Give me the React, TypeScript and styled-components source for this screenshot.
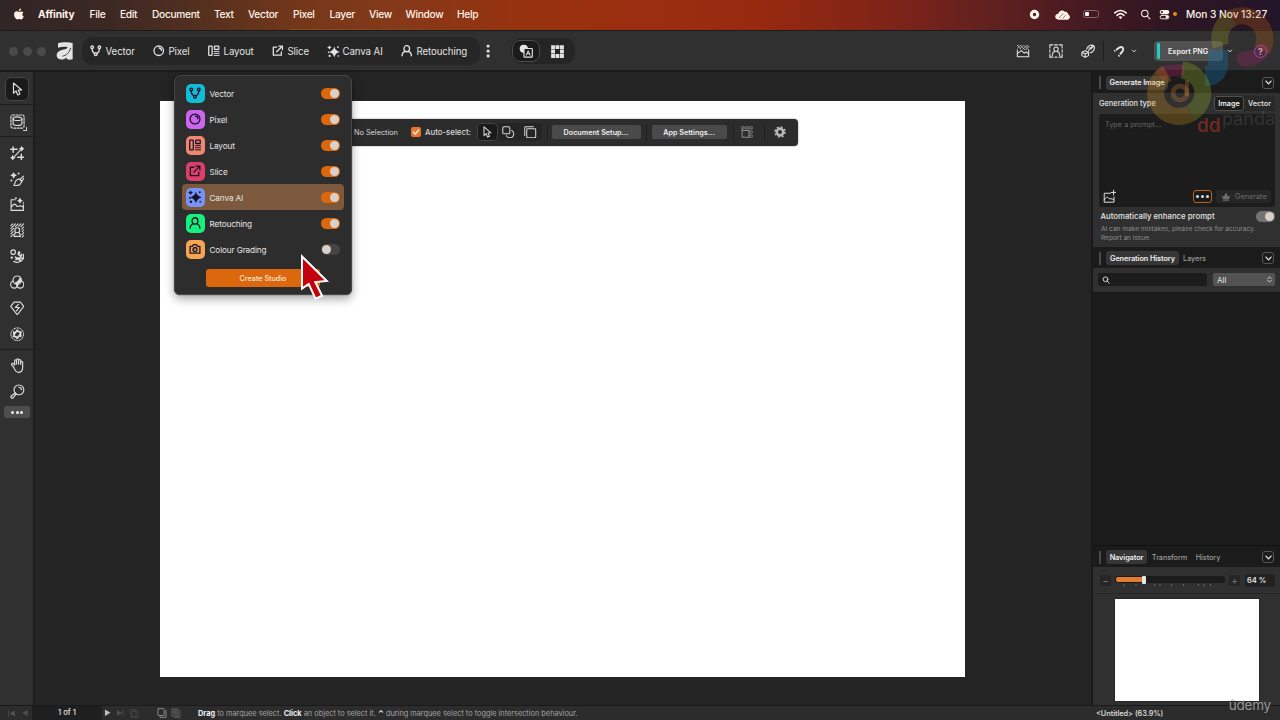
import React from 'react';
import styled, { createGlobalStyle, css } from 'styled-components';

const Global = createGlobalStyle`
  * { box-sizing: border-box; }
  html, body { margin: 0; padding: 0; overflow: hidden; background: #242424; }
  body { font-family: Inter, "Liberation Sans", sans-serif; color: #e4e4e4; -webkit-font-smoothing: antialiased; }
`;

/* ---------- icons ---------- */
type IconName =
  | 'apple' | 'logo' | 'vector' | 'pixel' | 'layout' | 'slice' | 'ai' | 'person' | 'camera' | 'dots'
  | 'shapeA' | 'gridSq' | 'noBg' | 'subject' | 'depth' | 'magnet' | 'chev' | 'arrow' | 'crop' | 'genExpand'
  | 'genBrush' | 'genImage' | 'bgRemove' | 'retouch' | 'colour' | 'quick' | 'lens' | 'hand' | 'zoom'
  | 'shapes' | 'layers' | 'snapGrid' | 'gear' | 'imgPlus' | 'crown' | 'search' | 'record' | 'cloud'
  | 'wifi' | 'control' | 'first' | 'prev' | 'next' | 'last' | 'page' | 'copy' | 'pageList' | 'updown';

const star = (x: number, y: number, r: number) => (
  <path
    fill="currentColor" stroke="none"
    d={`M${x} ${y - r}Q${x + r * 0.18} ${y - r * 0.18} ${x + r} ${y}Q${x + r * 0.18} ${y + r * 0.18} ${x} ${y + r}Q${x - r * 0.18} ${y + r * 0.18} ${x - r} ${y}Q${x - r * 0.18} ${y - r * 0.18} ${x} ${y - r}Z`}
  />
);

const drawings: Record<IconName, React.ReactNode> = {
  apple: <path fill="currentColor" stroke="none" d="M11.3 4.2c.9-.1 2 .3 2.7 1.2-2 1.3-1.700 4.200.4 5.100-.6 1.700-1.700 3.500-2.900 3.500-1 0-1.300-.6-2.500-.6s-1.600.6-2.500.6C4.700 14 2.600 10.800 2.600 8.100c0-2.600 1.600-4 3.200-4 1.100 0 2 .7 2.700.7s1.700-.6 2.800-.6zM8.400 3.800C8.300 2.200 9.600.8 11.100.6c.2 1.700-1.200 3.200-2.700 3.200z" />,
  logo: (
    <>
      <path fill="currentColor" stroke="none" d="M1.800 1.200C5 .1 11 0 14.800.8V15.400c-2 .6-3.800.5-5.300-.2v-1.400c-2.500 2.600-8.600 2.600-8.900-1.500C.4 8.600 4.500 7 9.300 6.100L10.300 4.500C8 3.900 4.500 4.100 1.800 5z" />
      <path d="M13 5.600C11.700 9.700 9.300 12.100 6 12.500" stroke="#303030" strokeWidth=".8" />
    </>
  ),
  vector: (
    <>
      <circle cx="3" cy="3.200" r="1.800" /><circle cx="13" cy="3.200" r="1.800" /><circle cx="8" cy="13" r="1.900" />
      <path d="M2.700 5c0 3 1 5 3.500 6.700M13.300 5c0 3-1 5-3.500 6.700" />
    </>
  ),
  pixel: <><circle cx="8" cy="8" r="6.600" /><path d="M8.500 4.200c1.800.1 3.200 1.400 3.300 3.300" /></>,
  layout: <><rect x="1" y="1.500" width="4.700" height="13" rx=".8" /><rect x="9" y="1.500" width="6" height="4.500" rx=".5" /><path d="M8.500 8.900h7M8.500 11.700h7M8.500 14.500h7" strokeWidth="1.300" /></>,
  slice: <><path d="M6.500 3H1.800v11.200H13V9.500M6.500 9.500 14.500 1.500M9.500 1.500h5v5" /></>,
  ai: <>{star(9, 8.500, 6.700)}{star(3, 3, 2.800)}<circle cx="13.500" cy="2.500" r="1.100" fill="currentColor" stroke="none" /><circle cx="2" cy="9" r="1" fill="currentColor" stroke="none" /><circle cx="3.300" cy="13.500" r="1.400" fill="currentColor" stroke="none" /><circle cx="14" cy="13.500" r="1" fill="currentColor" stroke="none" /></>,
  person: <><ellipse cx="8" cy="5.200" rx="3.900" ry="4.200" /><path d="M1.500 15c0-3.300 1.900-5.200 4.300-6M14.500 15c0-3.300-1.900-5.200-4.300-6" /></>,
  camera: <><path d="M1.500 4.500h3L6 2.200h4l1.500 2.300h3v9h-13z" /><circle cx="8" cy="8.700" r="2.700" /><path d="M7 8.700 8 7.500" strokeWidth="1" /></>,
  dots: <><rect x="6.700" y="1.800" width="2.800" height="2.800" rx=".8" fill="currentColor" stroke="none" /><rect x="6.700" y="6.700" width="2.800" height="2.800" rx=".8" fill="currentColor" stroke="none" /><rect x="6.700" y="11.600" width="2.800" height="2.800" rx=".8" fill="currentColor" stroke="none" /></>,
  shapeA: <><circle cx="5.500" cy="5.500" r="4.700" fill="currentColor" stroke="none" /><rect x="5.700" y="5.200" width="9.500" height="9.800" rx=".8" fill="#1b1b1b" strokeWidth="1.300" /><path d="m8.400 12.800 2.100-5.200 2.100 5.200M9.200 11h2.700" strokeWidth="1.100" /></>,
  gridSq: <path fill="currentColor" stroke="none" fillRule="evenodd" d="M1.200 1.200h4.100v4.100H1.200zM5.900 1.200H10v4.100H5.900zM10.700 1.200h4.100v4.100h-4.100zM1.200 5.900h4.100V10H1.200zM10.700 5.900h4.100V10h-4.100zM1.200 10.700h4.100v4.100H1.200zM5.900 10.700H10v4.100H5.900zM10.700 10.700h4.100v4.100h-4.100z" />,
  noBg: <><path d="M1.500 7v7.500h13V7M1.500 11 6 7.500l3.500 3 2-1.500 3 2.500" /><path d="m1.500 5 3.500-3.500M4.500 5.500l4-4M8 6l4.500-4.500M11 6.500l3.800-4M1.500 2l1-1M1.500 1.500l4 4M5 1.500l5 5M9 1.500l5 5M12.500 1.500l2 2" strokeWidth=".7" /></>,
  subject: <><path d="M1 4.500V1h3.500M11.500 1H15v3.500M15 11.500V15h-3.500M4.500 15H1v-3.500M6.500 1h3M1 6.500v3M15 6.500v3M7 15h2" /><circle cx="8" cy="6" r="2.500" /><path d="M3.700 13c0-2 1-3.800 2.800-4.700M12.300 13c0-2-1-3.800-2.800-4.700" /></>,
  depth: <><path d="M1 9.500 4.800 7.700l3.800 1.800v3.800l-3.800 2-3.800-2zM1 9.500l3.800 2 3.800-2M4.800 11.500v3.800" /><path d="M6.500 6c1-3 3.500-5 6.500-4.800C16 1.500 15.800 5 14.500 7c-1 1.700-2.500 2.800-4 3M8.500 8c0-2.500 4-2 6-5.800M9 4.500c1.500.5 3 0 4-3.300" /></>,
  magnet: <><path d="M4 6.300 8 3.300c4-2.200 6.500 1.700 4.500 4.300L9 12" strokeWidth="2.500" strokeLinecap="butt" /><path d="M1.700 8 2.900 7.100M7 14.500l1.100-1.400" strokeWidth="2.500" strokeLinecap="butt" /></>,
  chev: <path d="m3.500 5.500 4.500 5 4.500-5" strokeWidth="2.300" />,
  arrow: <path d="M4 1.200v11.600l3-2.600 1.800 4.600 2.500-1L9.500 9.300l3.800-.2z" />,
  crop: <><rect x="1" y="1" width="14" height="14" rx="2" strokeDasharray="2.200 1.400" /><ellipse cx="8" cy="5" rx="4.700" ry="1.900" /><path d="M3.300 5v5.500c0 2.400 9.400 2.400 9.400 0V5" /></>,
  genExpand: <><path d="M3.500 1v6M.8 3.500h7M12.500 9v6M8.500 12.500H15.300" strokeWidth="1.600" /><path d="m5 11.500 6.500-7" />{star(13, 3, 3.400)}{star(3, 13, 3.400)}</>,
  genBrush: <>{star(4, 3.700, 3.700)}<circle cx="9.500" cy="1.700" r="1.100" fill="currentColor" stroke="none" /><circle cx="1.500" cy="9.500" r="1.100" fill="currentColor" stroke="none" /><path d="m15 4.500-4.500 4M12.500 11.500 15 7M8.500 8c2.500-.7 4.500 1.200 4 3.300-.7 2.700-4 4.200-8.200 3.500 1.500-1.500.7-5.500 4.200-6.800z" /></>,
  genImage: <><path d="M5.500 3H1.200v11.800h13.600V8.500M1.500 11c3-4.500 4.500-3.500 6-.8 1.500 1 2.500-2.200 7 .8" />{star(11, 4, 3.500)}<circle cx="6.500" cy="1.500" r="1.100" fill="currentColor" stroke="none" /><circle cx="15" cy="6.500" r=".9" fill="currentColor" stroke="none" /></>,
  bgRemove: <><path d="m1 3 2-2M1 6l5-5M1 9l3-3M6 4l3-3M1 12l2.500-2.500M1 15l2.500-2.500M9.500 3.500 12 1M12 4l3-3M13 6.500l2-2M13.500 9.500l1.500-2M13 13l2.200-2.500M13.500 15.500l1.800-2" strokeWidth="1.150" /><circle cx="8" cy="8" r="2.700" /><path d="M4.500 15c0-2 .5-3.500 1.800-4.500M11.500 15c0-2-.5-3.500-1.800-4.500M5.500 14.800h5" /></>,
  retouch: <><circle cx="3.500" cy="3.500" r="2.500" /><path d="M14.800 6c1.200 6-5 11-10.800 7.500" /><path d="M9 5.500 10.500 7M6 9l6 4M13 6l-2 4M6.500 11.500l3-1.500M12 10l2.500.5" strokeWidth="1.800" /><circle cx="10" cy="4" r=".9" fill="currentColor" /><circle cx="2" cy="9.500" r=".7" fill="currentColor" /></>,
  colour: <><circle cx="4.700" cy="10.500" r="4" /><circle cx="11.300" cy="10.500" r="4" /><circle cx="8" cy="5.700" r="4.600" fill="#303030" /><path d="M4.500 8.800C8 8 9.800 5.500 11 2.300 14.500 6 12 10 8 10c-1.500 0-2.800-.4-3.500-1.200z" fill="currentColor" stroke="none" /><path d="M8 10.300v2.500" /></>,
  quick: <><path d="M4.500 1.300h7L15.200 6 8 15.200.8 6z" /><path d="M9.300 3.800 5.900 7.200h4.400L7 10.800" /></>,
  lens: <><circle cx="8" cy="8" r="7" strokeDasharray="1.800 1.400" strokeWidth="1.100" /><path d="M8 3.500 5.200 7.200M4.200 5.800 4.800 10M3.800 10.200 7.800 11.500M7.700 12.500 11 8.800M11.900 10.200 11.200 5.900M12.200 5.800 8.200 4.500" strokeWidth="2" /></>,
  hand: <path d="M4 10 2 7.500c-1-1.300.5-2.500 1.600-1.500L5 7.500V3c0-1.500 2-1.500 2 0v3.500V1.900c0-1.500 2.200-1.500 2.200 0v4.600V2.700c0-1.500 2.200-1.400 2.200 0v4.200V4.600c0-1.400 2.100-1.400 2.100 0v5.200c0 3.700-2 5.500-4.700 5.500C6 15.300 5.200 12.500 4 10z" />,
  zoom: <><circle cx="9.500" cy="6.300" r="5.200" /><path d="M5.800 9.500 1.200 12.800c-.7 1.500.6 2.700 2 2.100L6.700 10.600M9.500 3.500c1.500 0 2.500 1 2.700 2.500" /></>,
  shapes: <><rect x="1" y="1" width="9" height="9" rx="1.500" /><path d="M12.500 5.800a5 5 0 1 1-7 6.500" /></>,
  layers: <><rect x="3.500" y="3.500" width="11.500" height="11.500" rx="1.200" /><path d="M1 12V2c0-.6.400-1 1-1h10" /></>,
  snapGrid: <><path d="M1 1h3v3H1zM6.500 1h3v3h-3zM12 1h3v3h-3zM12 6.500h3v3h-3zM12 12h3v3h-3z" strokeWidth=".8" /><path d="M1.500 6v9h9V6z" strokeDasharray="1.200 1.300" strokeWidth="1.200" /></>,
  gear: <><circle cx="8" cy="8" r="4.300" strokeWidth="3.200" /><circle cx="8" cy="8" r="6.600" strokeWidth="2.200" strokeDasharray="2.600 2.584" strokeLinecap="butt" /></>,
  imgPlus: <><path d="M9 4H1.500v11h12V8.500M1.500 12C4 8 5.500 8 7.500 10.500c1.500 1.200 2.500-1 6 1.500M13 0v6M10 3h6" /></>,
  crown: <path fill="currentColor" stroke="none" d="M3 14h10v-1.700H3zM3.200 11.500h9.600L15 5l-3.500 2.500L8.700 2H7.300L4.500 7.500 1 5z" />,
  search: <><circle cx="7" cy="6.500" r="4.700" /><path d="m10.500 10.200 4 4.300" /></>,
  record: <><circle cx="8" cy="8" r="4.700" strokeWidth="4.400" /></>,
  cloud: <><path fill="currentColor" stroke="none" d="M4 13.500C1.500 13.500 0 12 .3 10S2.500 7.300 3.500 7.300C4 4.500 6.700 3 9 4l1.500 1C13 4.700 14 6.500 14 8c2.500.5 2.700 5.500-1 5.500z" /><path d="m4.500 11.500 4-4.500M8.500 12 11 9" stroke="#5a2020" strokeWidth=".6" /></>,
  wifi: <><path d="M1 6c4-4 10-4 14 0" strokeWidth="2" /><path d="M3.800 9c2.600-2.500 5.800-2.500 8.400 0" strokeWidth="2" /><path fill="currentColor" stroke="none" d="m8 13.800 2.300-2.600c-1.300-1.200-3.300-1.200-4.600 0z" /></>,
  control: <><rect x="1" y="1.500" width="14" height="6" rx="3" fill="currentColor" stroke="none" /><circle cx="4.200" cy="4.500" r="1.600" fill="#40202a" stroke="none" /><rect x="1.600" y="9.300" width="12.800" height="5" rx="2.500" /><circle cx="11.500" cy="11.800" r="2" fill="currentColor" stroke="none" /></>,
  first: <><path d="M2.500 3v10" strokeWidth="1.600" /><path fill="currentColor" stroke="none" d="M14 2.500v11L4 8z" /></>,
  prev: <path fill="currentColor" stroke="none" d="M13 2v12L2.500 8z" />,
  next: <path fill="currentColor" stroke="none" d="M2 1v14L14 8z" />,
  last: <><path d="M14 3v10" strokeWidth="1.600" /><path fill="currentColor" stroke="none" d="M2 2.500v11L12 8z" /></>,
  page: <><path d="M1.500 1.500h9v12h-9zM4.500 4.500h9.500V15H4.500z" /></>,
  copy: <><rect x="1.500" y="1" width="10" height="11" rx="1" /><path d="M14.500 4v11H5v-1" /></>,
  pageList: <><rect x="2" y="1.500" width="9.500" height="11.500" fill="currentColor" fillOpacity=".4" /><path d="M14.500 4v11H5M4 5h5M4 8h5" /></>,
  updown: <path d="m4 6 4-4 4 4M4 10l4 4 4-4" strokeWidth="2" />,
};

const Svg = styled.svg`
  display: block;
  flex: none;
  fill: none;
  stroke: currentColor;
  stroke-linecap: round;
  stroke-linejoin: round;
`;

const Icon = ({ name, size = 14, w = 1.35 }: { name: IconName; size?: number; w?: number }) => (
  <Svg viewBox="0 0 16 16" width={size} height={size} strokeWidth={w}>{drawings[name]}</Svg>
);

/* ---------- frame ---------- */
const Window = styled.div`
  position: relative;
  width: 1280px;
  height: 720px;
  display: flex;
  flex-direction: column;
  overflow: hidden;
  background: #242424;
`;

const MenuBar = styled.header`
  height: 30px;
  flex: none;
  display: flex;
  align-items: center;
  padding: 0 10px 2px 12px;
  color: #fff3ea;
  font-size: 10.200px;
  font-weight: 500;
  background:
    linear-gradient(90deg, transparent 290px, #84501c 290px, #8a3a14 480px, transparent 640px) 0 100% / 100% 1px no-repeat,
    linear-gradient(90deg, #302625 0, #3c2823 110px, #54301f 200px, #743719 300px, #84391a 390px, #97320f 520px, #9b2d10 650px, #97290f 760px, #7c2319 900px, #64211f 980px, #471a22 1080px, #2e1622 1170px, #23152a 1280px);
`;

const MenuItem = styled.span<{ $w: number; $bold?: boolean; $ls?: number }>`
  width: ${p => p.$w}px;
  flex: none;
  white-space: nowrap;
  font-weight: ${p => (p.$bold ? 700 : 500)};
  letter-spacing: ${p => p.$ls ?? -0.3}px;
`;

const Spacer = styled.span`flex: 1;`;

const Slot = styled.span<{ $w: number; $color?: string }>`
  width: ${p => p.$w}px;
  flex: none;
  display: flex;
  align-items: center;
  color: ${p => p.$color ?? 'inherit'};
`;

const Battery = styled.span`
  width: 16px;
  height: 8px;
  border: 1px solid #8d6263;
  border-radius: 2.500px;
  padding: 1px;
  &::before { content: ''; display: block; width: 4px; height: 4px; background: #fff; border-radius: 1px; }
`;

const OrangeDot = styled.span`
  width: 4px;
  height: 4px;
  border-radius: 50%;
  background: #ef8a10;
  margin-left: 3px;
`;

const TopBar = styled.div`
  height: 42px;
  flex: none;
  display: flex;
  align-items: center;
  background: #303030;
  border-top: 1px solid #1c1a1c;
  border-bottom: 2px solid #1b1b1b;
  padding: 1px 13px 0 9px;
`;

const Lights = styled.div`
  display: flex;
  gap: 5px;
  width: 47px;
  & > i { width: 9px; height: 9px; border-radius: 50%; background: #4a4a4a; }
`;

const StudioBar = styled.nav`
  height: 28px;
  width: 398px;
  margin-left: 8px;
  padding-left: 8px;
  border-radius: 10px;
  background: #262626;
  display: flex;
  align-items: center;
`;

const StudioTab = styled.span<{ $w: number }>`
  width: ${p => p.$w}px;
  flex: none;
  display: flex;
  align-items: center;
  font-size: 9.700px;
  letter-spacing: -0.1px;
  white-space: nowrap;
  color: #e2e2e2;
`;

const ViewSwitch = styled.div`
  height: 26px;
  width: 64px;
  margin-left: 15px;
  display: flex;
  align-items: center;
  border-radius: 11px;
  background: #252525;
`;

const SwitchButton = styled.span<{ $on?: boolean }>`
  width: ${p => (p.$on ? 28 : 36)}px;
  height: 22px;
  margin-left: ${p => (p.$on ? 1 : 0)}px;
  display: flex;
  align-items: center;
  justify-content: center;
  border-radius: 8px;
  ${p => p.$on && css`background: #1b1b1b; border: 1px solid #4b4b4b;`}
`;

const Rule = styled.span<{ $h: number; $m?: string }>`
  width: 1px;
  height: ${p => p.$h}px;
  background: #202020;
  margin: ${p => p.$m ?? '0'};
`;

const ExportButton = styled.span`
  width: 69px;
  height: 20px;
  display: flex;
  align-items: center;
  gap: 8px;
  padding-left: 3px;
  background: #515151;
  border-radius: 4px;
  font-size: 7.200px;
  font-weight: 600;
  color: #f1f1f1;
  white-space: nowrap;
  &::before { content: ''; width: 3px; height: 16px; background: #1fcdc9; border-radius: 1px; }
`;

const Help = styled.span`
  width: 13px;
  height: 13px;
  border: 1px solid #7a63b5;
  border-radius: 50%;
  display: flex;
  align-items: center;
  justify-content: center;
  font-size: 9px;
  font-weight: 600;
  color: #ece6f4;
`;

const Body = styled.div`
  flex: 1;
  min-height: 0;
  display: flex;
`;

/* ---------- left tools ---------- */
const Tools = styled.aside`
  width: 35px;
  flex: none;
  background: #303030;
  border-right: 2px solid #1e1e1e;
  display: flex;
  flex-direction: column;
  padding-top: 1px;
`;

const ToolGroup = styled.div<{ $pad: string; $line?: boolean }>`
  padding: ${p => p.$pad};
  display: flex;
  flex-direction: column;
  align-items: center;
  border-bottom: ${p => (p.$line ? '1px solid #1d1d1d' : '0')};
`;

const Tool = styled.span<{ $h: number; $on?: boolean }>`
  position: relative;
  width: 24px;
  height: ${p => p.$h}px;
  flex: none;
  display: flex;
  align-items: center;
  justify-content: center;
  color: #dedede;
  border-radius: 6px;
  ${p => p.$on && css`background: #1a1a1a; border: 1px solid #454545;`}
`;

const Corner = styled.i`
  position: absolute;
  right: 2px;
  bottom: 2px;
  width: 4px;
  height: 4px;
  border-right: 1px solid #ccc;
  border-bottom: 1px solid #ccc;
`;

const More = styled.span`
  width: 26px;
  height: 12px;
  margin: 2px auto 0 4px;
  border-radius: 2px;
  background: #4e4e4e;
  display: flex;
  align-items: center;
  justify-content: center;
  gap: 1.500px;
  & > i { width: 3px; height: 3px; border-radius: 50%; background: #eee; }
`;

/* ---------- canvas ---------- */
const Stage = styled.main`
  position: relative;
  width: 1056px;
  flex: none;
  padding: 28.500px 0 0 125px;
  background: #242424;
`;

const Artboard = styled.div`
  width: 805px;
  height: 576px;
  background: #fff;
`;

const ContextBar = styled.div`
  position: absolute;
  left: 265px;
  top: 47px;
  width: 498px;
  height: 27px;
  display: flex;
  align-items: center;
  padding: 0 0 1px 54px;
  border-radius: 4px;
  background: #2c2c2c;
  box-shadow: 0 0 2px rgba(0, 0, 0, .45);
  font-size: 7.300px;
  color: #dadada;
  white-space: nowrap;
`;

const Check = styled.span`
  width: 10px;
  height: 10px;
  flex: none;
  border-radius: 2px;
  background: #e8762b;
  display: flex;
  align-items: center;
  justify-content: center;
`;

const Segments = styled.span`
  width: 65px;
  height: 18px;
  display: flex;
  align-items: center;
  background: #252525;
  border-radius: 4px;
`;

const Segment = styled.span<{ $on?: boolean }>`
  width: ${p => (p.$on ? 21 : 22)}px;
  height: 18px;
  display: flex;
  align-items: center;
  justify-content: center;
  border-radius: 4px;
  ${p => p.$on && css`background: #1b1b1b; border: 1px solid #424242;`}
`;

const BarButton = styled.span<{ $w: number }>`
  width: ${p => p.$w}px;
  height: 14px;
  border-radius: 2px;
  background: #4a4a4a;
  color: #eee;
  font-size: 7.200px;
  font-weight: 600;
  display: flex;
  align-items: center;
  justify-content: center;
`;

const Label = styled.span<{ $w?: number; $size?: number; $weight?: number; $color?: string }>`
  width: ${p => (p.$w ? p.$w + 'px' : 'auto')};
  flex: none;
  white-space: nowrap;
  font-size: ${p => p.$size ?? 7.3}px;
  font-weight: ${p => p.$weight ?? 400};
  color: ${p => p.$color ?? 'inherit'};
`;

/* ---------- studio menu ---------- */
const Popup = styled.div`
  position: absolute;
  left: 174px;
  top: 75px;
  width: 178px;
  height: 219.500px;
  padding: 4px 7px 0;
  border-radius: 6px;
  border: 1px solid #484848;
  background: #2d2d2d;
  box-shadow: 0 4px 10px rgba(0, 0, 0, .35), 0 0 1px #000;
  display: flex;
  flex-direction: column;
`;

const PopupRow = styled.div<{ $on?: boolean }>`
  height: 26px;
  flex: none;
  display: flex;
  align-items: center;
  padding: 0 4px 0 4px;
  border-radius: 4px;
  background: ${p => (p.$on ? '#7c583c' : 'transparent')};
`;

const Badge = styled.span<{ $bg: string }>`
  width: 18.500px;
  height: 19px;
  border-radius: 5px;
  background: ${p => p.$bg};
  color: #17122a;
  display: flex;
  align-items: center;
  justify-content: center;
`;

const RowName = styled.span`
  flex: 1;
  padding: 1px 0 0 5px;
  font-size: 8.200px;
  letter-spacing: -0.12px;
  color: #e4e4e4;
`;

const Toggle = styled.span<{ $on?: boolean; $muted?: boolean }>`
  width: 19px;
  height: 11px;
  border-radius: 6px;
  padding: 1px;
  display: flex;
  justify-content: ${p => (p.$on ? 'flex-end' : 'flex-start')};
  background: ${p => (p.$muted ? '#737373' : p.$on ? '#dc670c' : '#444')};
  &::before { content: ''; width: 9px; height: 9px; border-radius: 50%; background: #d8d0c9; }
`;

const CreateButton = styled.div`
  width: 114px;
  height: 18px;
  margin: 7px 0 0 24px;
  border-radius: 3px;
  background: #dc670c;
  color: #f9e7d8;
  font-size: 7.200px;
  font-weight: 500;
  display: flex;
  align-items: center;
  justify-content: center;
`;

const Overlay = styled.svg<{ $x: number; $y: number }>`
  position: absolute;
  left: ${p => p.$x}px;
  top: ${p => p.$y}px;
  pointer-events: none;
`;

/* ---------- right panel ---------- */
const Side = styled.aside`
  flex: 1;
  min-width: 0;
  display: flex;
  flex-direction: column;
  background: #303030;
  border-left: 2px solid #191919;
`;

const PanelHead = styled.div<{ $h: number; $top: number }>`
  height: ${p => p.$h}px;
  flex: none;
  display: flex;
  align-items: center;
  padding: ${p => p.$top}px 6px 0;
  background: #1b1b1b;
  &::before { content: ''; width: 2px; height: 13px; background: #4a4a4a; margin-right: 5px; }
`;

const Tab = styled.span<{ $w: number; $on?: boolean }>`
  width: ${p => p.$w}px;
  height: 14px;
  border-radius: 3px;
  display: flex;
  align-items: center;
  justify-content: center;
  white-space: nowrap;
  font-size: 7.300px;
  font-weight: ${p => (p.$on ? 600 : 500)};
  letter-spacing: -0.08px;
  color: ${p => (p.$on ? '#f0f0f0' : '#999')};
  background: ${p => (p.$on ? '#363636' : 'transparent')};
`;

const Collapse = styled.span`
  width: 12px;
  height: 12px;
  border: 1px solid #555;
  border-radius: 3px;
  display: flex;
  align-items: center;
  justify-content: center;
`;

const Row = styled.div<{ $h: number; $pad?: string }>`
  height: ${p => p.$h}px;
  flex: none;
  display: flex;
  align-items: center;
  padding: ${p => p.$pad ?? '0 5px'};
`;

const TypeSwitch = styled.span`
  display: flex;
  height: 15px;
  width: 61px;
  border-radius: 3px;
  background: #282828;
  font-size: 7.300px;
  font-weight: 500;
`;

const TypeOption = styled.span<{ $on?: boolean }>`
  width: ${p => (p.$on ? 30 : 31)}px;
  display: flex;
  align-items: center;
  justify-content: center;
  border-radius: 3px;
  ${p => p.$on && css`background: #1c1c1c; border: 1px solid #505050; color: #fff;`}
`;

const Prompt = styled.div`
  height: 93px;
  flex: none;
  margin: 0 5px 0 6px;
  padding: 6px 3px 3px 6px;
  border-radius: 3px;
  background: #1c1c1c;
  display: flex;
  flex-direction: column;
  justify-content: space-between;
`;

const PromptActions = styled.div`
  display: flex;
  align-items: center;
  height: 15px;
  margin-left: -2px;
`;

const Options = styled.span`
  width: 19px;
  height: 13px;
  border: 1px solid #b9631f;
  border-radius: 3px;
  display: flex;
  gap: 2px;
  align-items: center;
  justify-content: center;
  & > i { width: 3px; height: 3px; border-radius: 50%; background: #ddd; }
`;

const Generate = styled.span`
  width: 55px;
  height: 13px;
  margin-left: 4px;
  border-radius: 2px;
  background: #262626;
  color: #6e6e6e;
  display: flex;
  align-items: center;
  gap: 4px;
  padding-left: 5px;
  font-size: 7.300px;
`;

const Note = styled.div`
  height: 22px;
  flex: none;
  padding: 0 8px;
  font-size: 6.550px;
  line-height: 9px;
  color: #8f8f8f;
  white-space: nowrap;
`;

const SearchField = styled.span`
  width: 109px;
  height: 13px;
  border-radius: 2px;
  background: #1c1c1c;
  display: flex;
  align-items: center;
  padding-left: 4px;
`;

const Select = styled.span`
  width: 62px;
  height: 13px;
  margin-left: 6px;
  border-radius: 2px;
  background: #535353;
  display: flex;
  align-items: center;
  justify-content: space-between;
  padding: 0 2px 0 4px;
  font-size: 8px;
`;

const HistoryList = styled.div`
  height: 254px;
  flex: none;
  background: #1c1c1c;
  border-top: 1px solid #161616;
  border-bottom: 1px solid #111;
`;

const StepButton = styled.span`
  width: 11px;
  height: 11px;
  border-radius: 2px;
  background: #262626;
  color: #777;
  font-size: 10px;
  display: flex;
  align-items: center;
  justify-content: center;
`;

const SliderBox = styled.span`
  width: 110px;
  margin: 0 4px 0 4px;
  height: 16px;
  display: flex;
  flex-direction: column;
  justify-content: flex-start;
`;

const Track = styled.span`
  height: 7px;
  border-radius: 3px;
  background: #1b1b1b;
  display: flex;
  align-items: center;
  margin-top: 4px;
`;

const Fill = styled.span`
  width: 27px;
  height: 5px;
  background: #e07d33;
  border-radius: 2px 0 0 2px;
  margin-left: 1px;
`;

const Knob = styled.span`
  width: 4px;
  height: 8px;
  border-radius: 1px;
  background: #e6e6e6;
  margin-left: -1px;
`;

const Percent = styled.span`
  width: 30px;
  height: 13px;
  margin-left: 5px;
  border-radius: 3px;
  background: #222;
  padding-left: 2px;
  display: flex;
  align-items: center;
  font-size: 7.500px;
  font-weight: 600;
`;

const Preview = styled.div`
  flex: 1;
  border-top: 1px solid #252525;
  padding: 5px 0 0 22px;
`;

const Thumb = styled.div`
  width: 144px;
  height: 102.500px;
  background: #fff;
  box-shadow: 0 0 1px #000;
`;

/* ---------- status ---------- */
const Status = styled.footer`
  height: 15px;
  flex: none;
  display: flex;
  align-items: center;
  background: #2c2c2c;
  border-top: 1px solid #1a1a1a;
  padding-left: 7px;
  white-space: nowrap;
`;

const PageBox = styled.span`
  width: 70px;
  height: 14px;
  background: #1f1f1f;
  display: flex;
  align-items: center;
  justify-content: center;
  padding-bottom: 2px;
  font-size: 7.700px;
  font-weight: 500;
  margin-right: 2px;
`;

const Hint = styled.span`
  width: 894px;
  font-size: 7.350px;
  color: #a5a5a5;
  & > b { color: #f2f2f2; font-weight: 700; }
`;

const Watermark = styled.div`
  position: absolute;
  right: 9px;
  bottom: 7px;
  font-size: 13.500px;
  line-height: 16px;
  letter-spacing: -0.2px;
  color: rgba(170, 170, 170, .85);
`;

const studios: { name: string; icon: IconName; bg: string; on: boolean; w: number }[] = [
  { name: 'Vector', icon: 'vector', bg: '#12bcd4', on: true, w: 63 },
  { name: 'Pixel', icon: 'pixel', bg: '#cc66f0', on: true, w: 55 },
  { name: 'Layout', icon: 'layout', bg: '#f08570', on: true, w: 64 },
  { name: 'Slice', icon: 'slice', bg: '#dc3f68', on: true, w: 55 },
  { name: 'Canva AI', icon: 'ai', bg: '#7693f5', on: true, w: 74 },
  { name: 'Retouching', icon: 'person', bg: '#18f07e', on: true, w: 75 },
  { name: 'Colour Grading', icon: 'camera', bg: '#f5a553', on: false, w: 0 },
];

const aiTools: IconName[] = ['genExpand', 'genBrush', 'genImage', 'bgRemove', 'retouch', 'colour', 'quick', 'lens'];

const menus: [string, number][] = [
  ['File', 30.5], ['Edit', 32], ['Document', 62], ['Text', 34], ['Vector', 45], ['Pixel', 36.5],
  ['Layer', 39.5], ['View', 36.5], ['Window', 51.5], ['Help', 30],
];

const Head = ({ tabs, h, top = 0 }: { tabs: [string, number][]; h: number; top?: number }) => (
  <PanelHead $h={h} $top={top}>
    {tabs.map(([t, w], i) => <Tab key={t} $w={w} $on={i === 0}>{t}</Tab>)}
    <Spacer />
    <Collapse><Icon name="chev" size={9} w={2} /></Collapse>
  </PanelHead>
);

export default function App() {
  return (
    <Window>
      <Global />
      <MenuBar>
        <Slot $w={26}><Icon name="apple" size={13} /></Slot>
        <MenuItem $w={51.5} $bold $ls={-0.1}>Affinity</MenuItem>
        {menus.map(([m, w]) => <MenuItem key={m} $w={w}>{m}</MenuItem>)}
        <Spacer />
        <Slot $w={26}><Icon name="record" size={11} /></Slot>
        <Slot $w={28}><Icon name="cloud" size={15} /></Slot>
        <Slot $w={31}><Battery /></Slot>
        <Slot $w={26}><Icon name="wifi" size={13} /></Slot>
        <Slot $w={19}><Icon name="search" size={11} w={1.5} /></Slot>
        <Slot $w={27}><Icon name="control" size={11} /><OrangeDot /></Slot>
        <MenuItem $w={55} $ls={-0.05}>Mon 3 Nov</MenuItem>
        <MenuItem $w={29} $ls={0.1}>13:27</MenuItem>
      </MenuBar>

      <TopBar>
        <Lights><i /><i /><i /></Lights>
        <Icon name="logo" size={18} />
        <StudioBar>
          {studios.filter(s => s.on).map(s => (
            <StudioTab key={s.name} $w={s.w}>
              <Slot $w={15.5}><Icon name={s.icon} size={s.icon === 'ai' ? 13 : 11.5} w={1.8} /></Slot>{s.name}
            </StudioTab>
          ))}
        </StudioBar>
        <Icon name="dots" size={16} />
        <ViewSwitch>
          <SwitchButton $on><Icon name="shapeA" size={14} /></SwitchButton>
          <SwitchButton><Icon name="gridSq" size={15} /></SwitchButton>
        </ViewSwitch>
        <Spacer />
        <Slot $w={33}><Icon name="noBg" w={1.2} /></Slot>
        <Slot $w={32}><Icon name="subject" w={1.2} /></Slot>
        <Slot $w={22.5}><Icon name="depth" w={1.2} /></Slot>
        <Rule $h={20} $m="0 9px 0 0" />
        <Slot $w={18}><Icon name="magnet" size={12.5} /></Slot>
        <Slot $w={23}><Icon name="chev" size={6} /></Slot>
        <ExportButton>Export PNG</ExportButton>
        <Slot $w={31}><Slot $w={4} /><Icon name="chev" size={6} /></Slot>
        <Help>?</Help>
      </TopBar>

      <Body>
        <Tools>
          <ToolGroup $pad="4px 0 3px" $line><Tool $h={24} $on><Icon name="arrow" /></Tool></ToolGroup>
          <ToolGroup $pad="4px 0 3px 1px" $line><Tool $h={24}><Icon name="crop" size={15} w={1.2} /><Corner /></Tool></ToolGroup>
          <ToolGroup $pad="3px 0 2px 1px" $line>
            {aiTools.map(t => <Tool key={t} $h={25.85}><Icon name={t} size={14.5} w={1.25} /></Tool>)}
          </ToolGroup>
          <ToolGroup $pad="3px 0 0 1px">
            <Tool $h={26}><Icon name="hand" size={15} w={1.25} /></Tool>
            <Tool $h={25.5}><Icon name="zoom" size={15} w={1.25} /></Tool>
          </ToolGroup>
          <More><i /><i /><i /></More>
        </Tools>

        <Stage>
          <Artboard />
          <ContextBar>
            <Label $w={57}>No Selection</Label>
            <Check><Svg viewBox="0 0 10 10" width={10} height={10} strokeWidth={1.3}><path d="m2.500 5.200 1.800 1.900 3.300-4.200" stroke="#fff" /></Svg></Check>
            <Slot $w={4} />
            <Label $w={47} $size={7.8} $weight={500}>Auto-select:</Label>
            <Slot $w={4.5} />
            <Segments>
              <Segment $on><Icon name="arrow" size={12} w={1.4} /></Segment>
              <Segment><Icon name="shapes" size={12.5} w={1.3} /></Segment>
              <Segment><Icon name="layers" size={12.5} w={1.3} /></Segment>
            </Segments>
            <Rule $h={17} $m="0 4px 0 5px" />
            <BarButton $w={89}>Document Setup...</BarButton>
            <Rule $h={17} $m="0 5px" />
            <BarButton $w={75}>App Settings...</BarButton>
            <Rule $h={17} $m="0 7.5px 0 6px" />
            <Slot $w={23} $color="#a8a8a8"><Icon name="snapGrid" size={12} /></Slot>
            <Rule $h={17} $m="0 9px 0 0" />
            <Slot $w={13} $color="#b9b9b9"><Icon name="gear" size={12} /></Slot>
          </ContextBar>
        </Stage>

        <Side>
          <Head h={21} tabs={[['Generate Image', 62]]} />
          <Row $h={21} $pad="0 5px 1px 6px">
            <Label $size={7.4} $weight={500}>Generation type</Label><Spacer />
            <TypeSwitch><TypeOption $on>Image</TypeOption><TypeOption>Vector</TypeOption></TypeSwitch>
          </Row>
          <Prompt>
            <Label $color="#666">Type a prompt...</Label>
            <PromptActions>
              <Slot $w={90}><Icon name="imgPlus" size={13} w={1.2} /></Slot>
              <Options><i /><i /><i /></Options>
              <Generate><Icon name="crown" size={10} />Generate</Generate>
            </PromptActions>
          </Prompt>
          <Row $h={18} $pad="0 5px 0 7.5px">
            <Label $size={7.8} $weight={500}>Automatically enhance prompt</Label><Spacer />
            <Toggle $on $muted />
          </Row>
          <Note>AI can make mistakes, please check for accuracy.<br />Report an issue.</Note>
          <Head h={21} top={1} tabs={[['Generation History', 73], ['Layers', 31]]} />
          <Row $h={24} $pad="0 5px 1px">
            <SearchField><Icon name="search" size={8} w={1.8} /></SearchField>
            <Select>All<Icon name="updown" size={7} w={1.8} /></Select>
          </Row>
          <HistoryList />
          <Head h={21} top={1} tabs={[['Navigator', 41], ['Transform', 45], ['History', 32]]} />
          <Row $h={25.5} $pad="1px 0 0 7px">
            <StepButton>−</StepButton>
            <SliderBox>
              <Track><Fill /><Knob /></Track>
              <svg width="110" height="4"><path d="M9 1v2M21 1v2M39.500 1v2M45 1v2M56.500 1v2M68.500 1v2M83.500 1v2M89 1v2M95.500 1v2" stroke="#666" /></svg>
            </SliderBox>
            <StepButton>+</StepButton>
            <Percent>64 %</Percent>
          </Row>
          <Preview><Thumb /></Preview>
        </Side>
      </Body>

      <Status>
        <Slot $w={14} $color="#505050"><Icon name="first" size={9} /></Slot>
        <Slot $w={11} $color="#505050"><Icon name="prev" size={8} /></Slot>
        <PageBox>1 of 1</PageBox>
        <Slot $w={12} $color="#bcbcbc"><Icon name="next" size={7.5} /></Slot>
        <Slot $w={14} $color="#505050"><Icon name="last" size={8} /></Slot>
        <Slot $w={26.5} $color="#4a4a4a"><Icon name="page" size={9} /></Slot>
        <Slot $w={14} $color="#9a9a9a"><Icon name="copy" size={10} /></Slot>
        <Slot $w={27.5} $color="#606060"><Icon name="pageList" size={10} /></Slot>
        <Hint><b>Drag</b> to marquee select. <b>Click</b> an object to select it. <b>⌃</b> during marquee select to toggle intersection behaviour.</Hint>
        <Slot $w={4} />
        <Label $size={7.3} $weight={500}>&lt;Untitled&gt; (63.9%)</Label>
      </Status>

      <Popup>
        {studios.map(s => (
          <PopupRow key={s.name} $on={s.name === 'Canva AI'}>
            <Badge $bg={s.bg}><Icon name={s.icon} size={s.icon === 'ai' ? 14 : 12} w={1.7} /></Badge>
            <RowName>{s.name}</RowName>
            <Toggle $on={s.on} />
          </PopupRow>
        ))}
        <CreateButton>Create Studio</CreateButton>
      </Popup>

      <Overlay $x={298} $y={250} width="34" height="54" viewBox="298 250 34 54">
        <path d="M302 256.500v32l6.700-4.600 6.800 14.800 6.600-3-6.800-13.700 11.500-1z" fill="#c4000c" stroke="#fff" strokeWidth="2" strokeLinejoin="miter" />
      </Overlay>

      <Overlay $x={1140} $y={0} width="140" height="140" viewBox="1140 0 140 140">
        <g fill="none" strokeWidth="17">
          <path d="M1221 46A23 23 0 0 1 1232 18" stroke="#a7a020" strokeOpacity=".28" />
          <path d="M1232 18A23 23 0 0 1 1262 50" stroke="#d06a10" strokeOpacity=".26" />
          <path d="M1262 51Q1255 60 1244 59" stroke="#b02070" strokeOpacity=".28" strokeWidth="15" strokeLinecap="round" />
          <path d="M1218 50V66Q1216 76 1205 76" stroke="#1477b0" strokeOpacity=".32" strokeWidth="20" />
          <path d="M1159 76Q1168 68 1184 71" stroke="#c01c70" strokeOpacity=".28" strokeWidth="12" />
          <path d="M1191 113A23 23 0 1 1 1167 73" stroke="#c98a1c" strokeOpacity=".3" />
          <path d="M1182 70A23 23 0 0 1 1191 113" stroke="#8fa92a" strokeOpacity=".32" />
          <circle cx="1180" cy="93" r="7" stroke="#e08a40" strokeOpacity=".25" strokeWidth="5" />
          <path d="M1187 80v16" stroke="#e08a40" strokeOpacity=".26" strokeWidth="4" />
        </g>
        <text x="1197" y="132" fontSize="19" fontWeight="600" fill="#c23a25" fillOpacity=".48" fontFamily="Inter">dd</text>
        <text x="1222" y="125" fontSize="18" fill="#aaa" fillOpacity=".17" fontFamily="Inter">panda</text>
      </Overlay>

      <Watermark>ûdemy</Watermark>
    </Window>
  );
}
